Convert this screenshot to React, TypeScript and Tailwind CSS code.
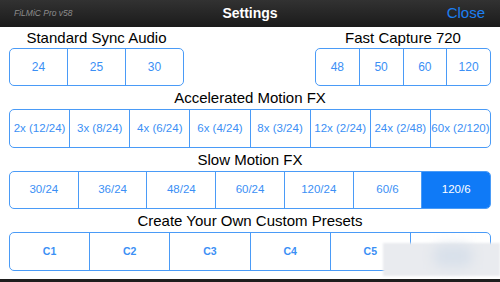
import React from "react";

const font = { fontFamily: '"Liberation Sans", Arial, Helvetica, sans-serif' };

function Seg({
  items,
  className,
  textClass,
  selected,
}: {
  items: string[];
  className: string;
  textClass: string;
  selected?: number;
}) {
  return (
    <div className={`flex rounded-[5px] border border-[#4a9bf7] overflow-hidden ${className}`}>
      {items.map((t, i) => (
        <div
          key={t}
          className={`flex-1 flex items-center justify-center whitespace-nowrap ${
            i > 0 ? "border-l border-[#4a9bf7]" : ""
          } ${selected === i ? "bg-[#0f7af7] text-white" : "text-[#3b8ff5]"} ${textClass}`}
        >
          {t}
        </div>
      ))}
    </div>
  );
}

function Heading({ children, h }: { children: React.ReactNode; h: string }) {
  return (
    <div className={`text-center text-[15px] text-black ${h}`}>{children}</div>
  );
}

export default function App() {
  return (
    <div className="w-[500px] h-[282px] bg-white flex flex-col relative overflow-hidden" style={font}>
      <div className="h-[27px] bg-gradient-to-b from-[#323232] to-[#1b1b1b] flex items-center px-[14px] relative">
        <div className="italic text-[8.5px] text-[#8c8c8c] w-[120px]">FiLMiC Pro v58</div>
        <div className="flex-1 text-center text-white font-bold text-[14px]">Settings</div>
        <div className="w-[120px] text-right text-[15px] text-[#1c7ff2] pr-[1px]">Close</div>
      </div>
      <div className="flex flex-col px-[9px]">
        <div className="flex justify-between">
          <div className="w-[175px] flex flex-col">
            <Heading h="h-[21px] leading-[21px]">Standard Sync Audio</Heading>
            <Seg items={["24", "25", "30"]} className="h-[38px]" textClass="text-[12px]" />
          </div>
          <div className="w-[176px] flex flex-col">
            <Heading h="h-[21px] leading-[21px]">Fast Capture 720</Heading>
            <Seg items={["48", "50", "60", "120"]} className="h-[38px]" textClass="text-[12px]" />
          </div>
        </div>
        <Heading h="h-[23px] leading-[23px]">Accelerated Motion FX</Heading>
        <Seg
          items={["2x (12/24)", "3x (8/24)", "4x (6/24)", "6x (4/24)", "8x (3/24)", "12x (2/24)", "24x (2/48)", "60x (2/120)"]}
          className="h-[39px]"
          textClass="text-[11.5px]"
        />
        <Heading h="h-[23px] leading-[23px]">Slow Motion FX</Heading>
        <Seg
          items={["30/24", "36/24", "48/24", "60/24", "120/24", "60/6", "120/6"]}
          className="h-[38px]"
          textClass="text-[11.5px]"
          selected={6}
        />
        <Heading h="h-[23px] leading-[23px]">Create Your Own Custom Presets</Heading>
        <Seg
          items={["C1", "C2", "C3", "C4", "C5", "C6"]}
          className="h-[39px]"
          textClass="text-[10.5px] font-bold"
        />
      </div>
      <div className="flex-1" />
      <div className="h-[3px] bg-[#1e1e1e]" />
      <div className="absolute left-[383px] top-[243px] w-[117px] h-[33px] bg-[#e9ebef] blur-[1px]">
        <div className="absolute left-[50px] top-[2px] w-[40px] h-[22px] rounded-full bg-[#d8e0ea] blur-[6px]" />
      </div>
    </div>
  );
}
